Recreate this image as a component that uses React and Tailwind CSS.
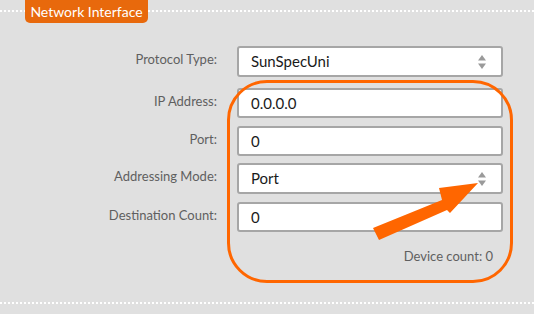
import React from 'react';

const fieldBox = "w-[266px] bg-white border-2 border-[#a6a6a6] rounded-[3px] flex items-center pl-[12px] pr-[14px] text-[15px] text-[#1a1a1a]";

function SelectArrows() {
    return (
        <svg width="10" height="16" viewBox="0 0 10 16" className="ml-auto">
            <path d="M5 1 L9 6.5 L1 6.5 Z" fill="#9a9a9a" />
            <path d="M5 15 L9 9.5 L1 9.5 Z" fill="#9a9a9a" />
        </svg>
    );
}

function Row({ label, className = "", children }) {
    return (
        <div className={`flex items-center ${className}`}>
            <label className="w-[218px] text-right text-[13px] text-[#5f5f5f] pr-px pb-[3px]">{label}</label>
            <div className="ml-[19px]">{children}</div>
        </div>
    );
}

export default function App() {
    return (
        <div className="relative w-[534px] h-[314px] bg-[#e0e0e0] overflow-hidden font-['Lato','Open_Sans',sans-serif]">
            {/* Legend */}
            <div className="relative h-[23px]">
                <div className="absolute left-0 right-0 top-[10px] border-t-2 border-dotted border-white" />
                <div className="absolute left-[25px] top-0 h-[23px] w-[123px] bg-[#e8690c] rounded-b-[5px] flex items-center justify-center text-white text-[14px]">
                    Network Interface
                </div>
            </div>

            {/* Form */}
            <div className="flex flex-col pt-[23px]">
                <Row label="Protocol Type:">
                    <div className={`${fieldBox} h-[31px]`}>
                        SunSpecUni
                        <SelectArrows />
                    </div>
                </Row>
                <Row label="IP Address:" className="mt-[11px]">
                    <div className={`${fieldBox} h-[30px]`}>0.0.0.0</div>
                </Row>
                <Row label="Port:" className="mt-[8px]">
                    <div className={`${fieldBox} h-[30px]`}>0</div>
                </Row>
                <Row label="Addressing Mode:" className="mt-[7px]">
                    <div className={`${fieldBox} h-[31px]`}>
                        Port
                        <SelectArrows />
                    </div>
                </Row>
                <Row label="Destination Count:" className="mt-[8px]">
                    <div className={`${fieldBox} h-[30px]`}>0</div>
                </Row>
                <div className="mt-[15px] w-[493px] text-right text-[13px] text-[#5f5f5f]">Device count: 0</div>
            </div>

            <div className="absolute left-0 right-0 top-[302px] border-t-2 border-dotted border-white" />

            {/* Annotation */}
            <div className="absolute left-[227px] top-[80px] w-[286px] h-[203px] border-[3px] border-[#ff6600] rounded-[40px] pointer-events-none" />
            <svg className="absolute left-0 top-0 pointer-events-none" width="534" height="314">
                <polygon points="373,228 442,200 439,188 478,183 450,213 447,210 379,240" fill="#ff6600" />
            </svg>
        </div>
    );
}
